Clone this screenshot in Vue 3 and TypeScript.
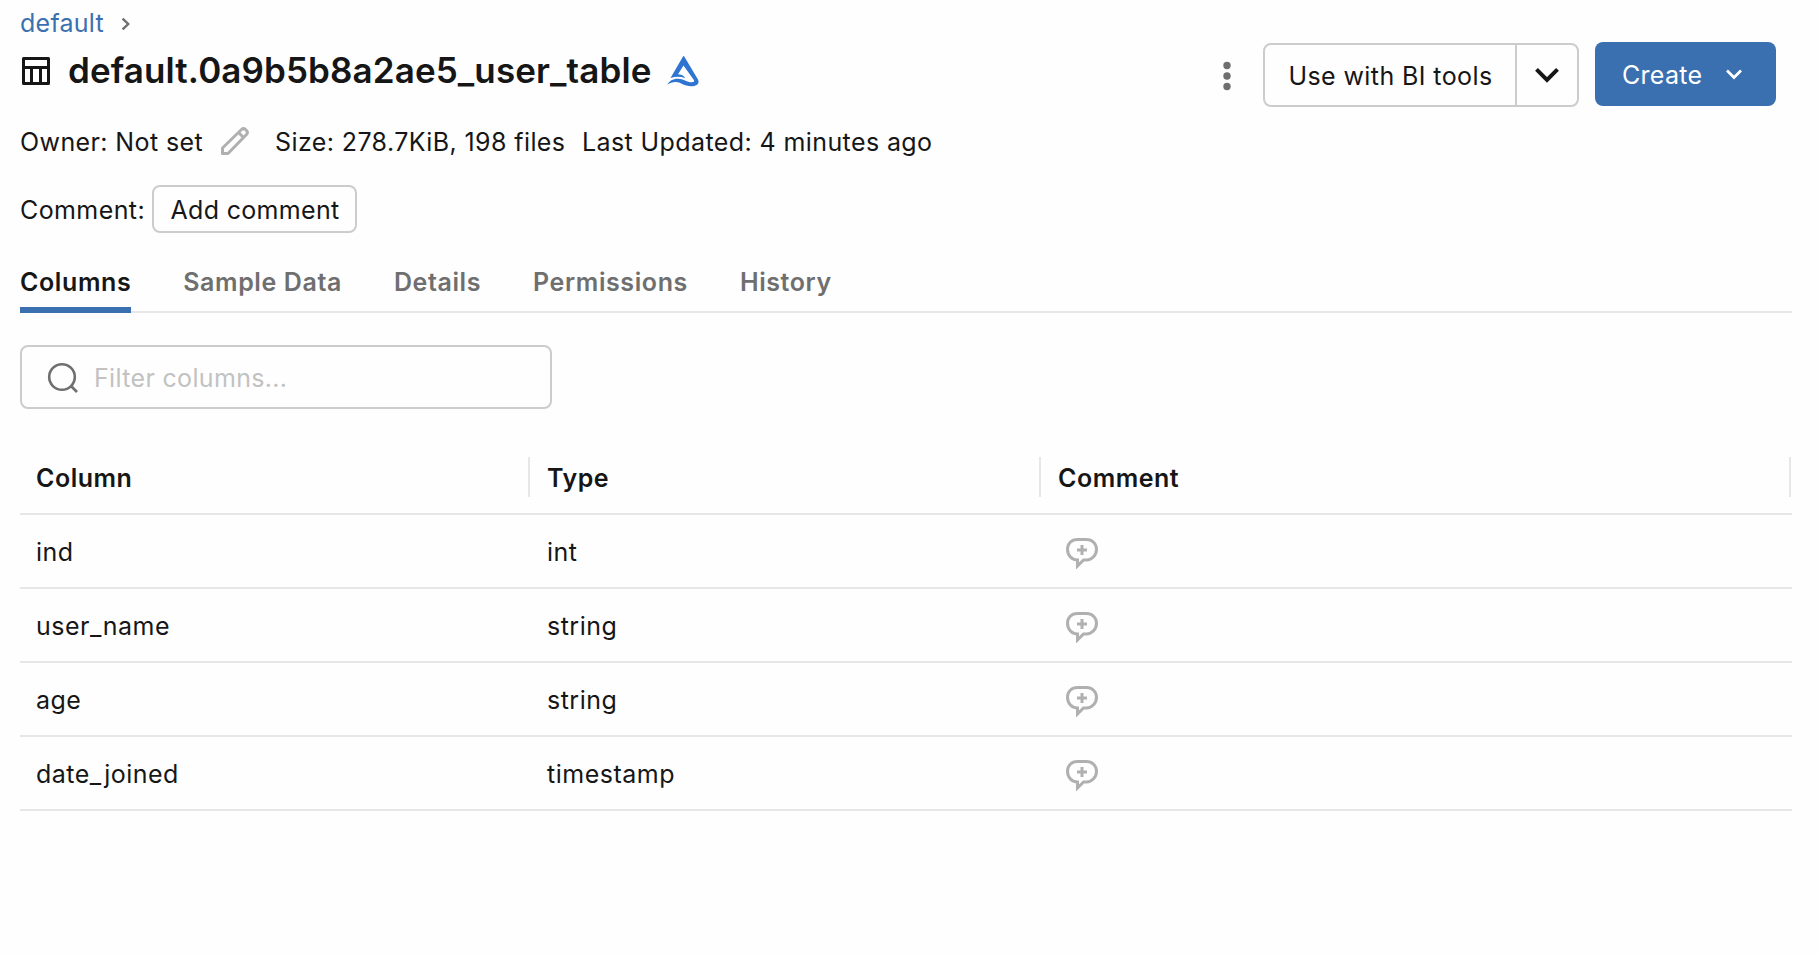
<script setup lang="ts">
import { ref } from 'vue'

interface Column {
  name: string
  type: string
}

const columns: Column[] = [
  { name: 'ind', type: 'int' },
  { name: 'user_name', type: 'string' },
  { name: 'age', type: 'string' },
  { name: 'date_joined', type: 'timestamp' },
]

const tabs: string[] = ['Columns', 'Sample Data', 'Details', 'Permissions', 'History']
const activeTab = ref('Columns')
const filter = ref('')
</script>

<template>
  <main class="page">
    <nav class="crumbs">
      <a class="crumb">default</a>
      <svg class="crumb-sep" width="12" height="16" viewBox="0 0 12 16">
        <path d="M2.6 2.6 8.2 8l-5.6 5.4" fill="none" stroke="#6f6f6f" stroke-width="2.4" />
      </svg>
    </nav>

    <header class="head">
      <div class="title-row">
        <svg class="table-icon" width="28" height="28" viewBox="0 0 28 28">
          <path
            d="M1.5 1.5h25v25h-25zM1.5 10.5h25M9.5 10.5v16M18.5 10.5v16"
            fill="none"
            stroke="#161616"
            stroke-width="3"
            stroke-linejoin="round"
          />
        </svg>
        <h1 class="title">default.0a9b5b8a2ae5_user_table</h1>
        <svg class="delta" width="32" height="31" viewBox="0 0 32 31">
          <path
            d="M16.300 0C17 0 17.500 .8 18 1.700L31 23.500C33 27.500 29.500 30.200 24.500 30.200C16.500 30.200 14.500 26.200 9 26C5.500 25.900 3 27 .3 28.700C2.300 24.800 6 22.600 11 22.700C17 22.800 19.500 26.300 25 26.300C27.300 26.200 27.600 25.300 26.700 23.700L16.500 9.500L11 18.300C14 18.300 17 19.500 18.200 22.200C13.500 20.300 9 20.300 3.500 22Z"
            fill="#2f74d0"
          />
        </svg>
      </div>
      <div class="actions">
        <button class="kebab" aria-label="More">
          <svg width="8" height="30" viewBox="0 0 8 30">
            <circle v-for="y in [4.5, 15, 25.5]" :key="y" cx="4" :cy="y" r="3.7" fill="#6f6f6f" />
          </svg>
        </button>
        <div class="split">
          <button class="split-main">Use with BI tools</button>
          <button class="split-more" aria-label="Options">
            <svg width="26" height="18" viewBox="0 0 26 18">
              <path d="M2.5 3.300 13 13.800 23.500 3.300" fill="none" stroke="#161616" stroke-width="4" />
            </svg>
          </button>
        </div>
        <button class="create">
          <span>Create</span>
          <svg width="18" height="14" viewBox="0 0 18 14">
            <path d="M2 3.5 9 10.5 16 3.5" fill="none" stroke="#fff" stroke-width="2.7" />
          </svg>
        </button>
      </div>
    </header>

    <section class="meta">
      <span class="owner">Owner: Not set</span>
      <svg class="pencil" width="28" height="28" viewBox="0 0 28 28">
        <path
          d="M1.5 26.5v-5.5L20.500 2.500q2-1.800 4 0l1 1q1.800 2 0 4L7 26.500zM17.500 5.500l5 5"
          fill="none"
          stroke="#b0b0b0"
          stroke-width="3"
          stroke-linejoin="round"
        />
      </svg>
      <span class="size">Size: 278.7KiB, 198 files</span>
      <span class="updated">Last Updated: 4 minutes ago</span>
    </section>

    <section class="comment-row">
      <span class="comment-label">Comment:</span>
      <button class="add-comment">Add comment</button>
    </section>

    <div class="tabs" role="tablist">
      <button
        v-for="tab in tabs"
        :key="tab"
        class="tab"
        :class="{ active: tab === activeTab }"
        role="tab"
        @click="activeTab = tab"
      >
        {{ tab }}
      </button>
    </div>

    <label class="filter">
      <svg width="32" height="32" viewBox="0 0 32 32">
        <circle cx="15" cy="15" r="12.8" fill="none" stroke="#6f6f6f" stroke-width="2.6" />
        <path d="M23.5 23.5 30 30" stroke="#6f6f6f" stroke-width="2.6" />
      </svg>
      <input v-model="filter" class="filter-input" type="text" placeholder="Filter columns..." />
    </label>

    <div class="grid">
      <div class="row header">
        <span class="cell">Column</span>
        <span class="cell">Type</span>
        <span class="cell">Comment</span>
      </div>
      <div v-for="col in columns" :key="col.name" class="row">
        <span class="cell">{{ col.name }}</span>
        <span class="cell">{{ col.type }}</span>
        <span class="cell icon-cell">
          <svg width="32" height="31" viewBox="0 0 32 31">
            <path
              d="M11.5 1.5h9c5.500 0 10 4 10 9.800s-4.500 10.700-10 10.700h-3L11.500 28v-6C5.500 22 1.500 17 1.500 11.300S5.500 1.500 11.500 1.500z"
              fill="none"
              stroke="#b0b0b0"
              stroke-width="3"
            />
            <path d="M16 7v10M11 12h10" stroke="#b0b0b0" stroke-width="3" />
          </svg>
        </span>
      </div>
    </div>
  </main>
</template>

<style>
body {
  margin: 0;
  background: #fefefe;
}
</style>

<style scoped>
.page {
  box-sizing: border-box;
  width: 1818px;
  height: 956px;
  padding: 0 26px 0 20px;
  overflow: hidden;
  background: #fefefe;
  color: #161616;
  font-family: Inter, 'Liberation Sans', sans-serif;
  font-size: 25px;
  line-height: 32px;
  letter-spacing: 0.4px;
  white-space: nowrap;
}

button {
  box-sizing: border-box;
  margin: 0;
  padding: 0;
  border: 0;
  background: none;
  color: inherit;
  font: inherit;
  letter-spacing: inherit;
}

svg {
  display: block;
  flex: none;
}

.crumbs {
  display: flex;
  height: 42px;
  padding-top: 7px;
  box-sizing: border-box;
}

.crumb {
  width: 100px;
  color: #3b70b0;
  letter-spacing: 0.25px;
}

.crumb-sep {
  margin-top: 9px;
}

.head {
  display: flex;
  justify-content: space-between;
  height: 66px;
}

.title-row {
  display: flex;
  padding-left: 2px;
}

.table-icon {
  margin-top: 15px;
}

.title {
  width: 599px;
  margin: 7px 0 0 18px;
  font-size: 35px;
  font-weight: 600;
  line-height: 42px;
  letter-spacing: 0.11px;
}

.delta {
  margin-top: 14px;
}

.actions {
  display: flex;
  padding-right: 16px;
}

.kebab {
  width: 8px;
  height: 66px;
  margin-right: 32px;
  padding-top: 2px;
}

.split {
  box-sizing: border-box;
  display: flex;
  width: 316px;
  height: 64px;
  margin: 1px 16px 0 0;
  border: 2px solid #cccccc;
  border-radius: 8px;
}

.split-main {
  width: 250px;
  padding: 2px 0 0 1px;
  text-align: center;
}

.split-more {
  display: flex;
  flex: 1;
  align-items: center;
  justify-content: center;
  border-left: 2px solid #cccccc;
}

.create {
  display: flex;
  align-items: center;
  justify-content: space-between;
  width: 181px;
  height: 64px;
  padding: 0 33px 0 27px;
  border-radius: 8px;
  background: #3b70b0;
  color: #fff;
  letter-spacing: 0.3px;
}

.create span {
  padding-top: 2px;
}

.meta {
  display: flex;
  height: 77px;
  padding-top: 18px;
  box-sizing: border-box;
}

.owner {
  width: 201px;
}

.pencil {
  margin-top: 1px;
}

.size {
  width: 307px;
  margin-left: 26px;
}

.comment-row {
  display: flex;
  height: 80px;
}

.comment-label {
  width: 132px;
  padding-top: 9px;
}

.add-comment {
  width: 205px;
  height: 48px;
  padding: 2px 0 0 1px;
  border: 2px solid #cccccc;
  border-radius: 8px;
  letter-spacing: 0.33px;
}

.tabs {
  box-sizing: border-box;
  display: flex;
  gap: 52px;
  height: 48px;
  border-bottom: 2px solid #e7e7e7;
}

.tab {
  height: 48px;
  padding-bottom: 14px;
  color: #6f6f6f;
  font-weight: 600;
  letter-spacing: 0.6px;
}

.tab.active {
  border-bottom: 6px solid #3b70b0;
  padding-bottom: 8px;
  color: #161616;
}

.filter {
  box-sizing: border-box;
  display: flex;
  align-items: center;
  width: 532px;
  height: 64px;
  margin-top: 32px;
  padding: 2px 0 0 25px;
  border: 2px solid #cccccc;
  border-radius: 8px;
}

.filter-input {
  flex: 1;
  min-width: 0;
  margin-left: 15px;
  padding: 0;
  border: 0;
  outline: 0;
  background: none;
  color: inherit;
  font: inherit;
  letter-spacing: 0.33px;
}

.filter-input::placeholder {
  color: #c2c2c2;
  opacity: 1;
}

.grid {
  margin-top: 32px;
}

.row {
  box-sizing: border-box;
  display: grid;
  grid-template-columns: 510px 511px 1fr;
  align-items: center;
  height: 74px;
  padding-top: 2px;
  border-bottom: 2px solid #e7e7e7;
  letter-spacing: 0.5px;
}

.cell {
  box-sizing: border-box;
  padding-left: 17px;
}

.cell:first-child {
  padding-left: 16px;
}

.header {
  padding: 0 1px 0 0;
  font-weight: 600;
}

.header .cell {
  height: 40px;
  padding-top: 5px;
  border-right: 2px solid #e7e7e7;
}

.row .icon-cell {
  padding: 2px 0 0 25px;
}
</style>
